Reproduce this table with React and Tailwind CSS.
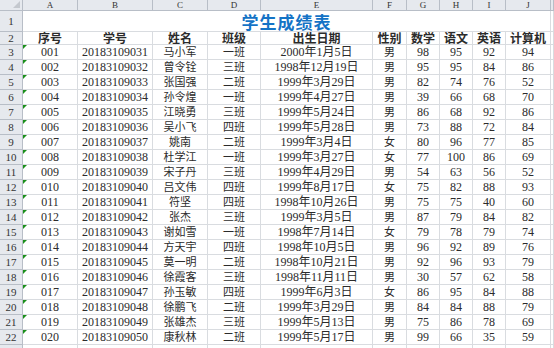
import React from "react";

const cols = ["A", "B", "C", "D", "E", "F", "G", "H", "I", "J", ""];
const headers = ["序号", "学号", "姓名", "班级", "出生日期", "性别", "数学", "语文", "英语", "计算机"];
const data = [
  ["001", "20183109031", "马小军", "一班", "2000年1月5日", "男", 98, 95, 92, 94],
  ["002", "20183109032", "曾令铨", "三班", "1998年12月19日", "男", 95, 95, 84, 86],
  ["003", "20183109033", "张国强", "二班", "1999年3月29日", "男", 82, 74, 76, 52],
  ["004", "20183109034", "孙令煌", "一班", "1999年4月27日", "男", 39, 66, 68, 70],
  ["005", "20183109035", "江晓勇", "三班", "1999年5月24日", "男", 86, 68, 92, 86],
  ["006", "20183109036", "吴小飞", "四班", "1999年5月28日", "男", 73, 88, 72, 84],
  ["007", "20183109037", "姚南", "二班", "1999年3月4日", "女", 80, 96, 77, 85],
  ["008", "20183109038", "杜学江", "一班", "1999年3月27日", "女", 77, 100, 86, 69],
  ["009", "20183109039", "宋子丹", "三班", "1999年4月29日", "男", 54, 63, 56, 52],
  ["010", "20183109040", "吕文伟", "四班", "1999年8月17日", "女", 75, 82, 88, 93],
  ["011", "20183109041", "符坚", "四班", "1998年10月26日", "男", 75, 75, 40, 60],
  ["012", "20183109042", "张杰", "三班", "1999年3月5日", "男", 87, 79, 84, 82],
  ["013", "20183109043", "谢如雪", "一班", "1998年7月14日", "女", 79, 78, 79, 74],
  ["014", "20183109044", "方天宇", "四班", "1998年10月5日", "男", 96, 92, 89, 76],
  ["015", "20183109045", "莫一明", "二班", "1998年10月21日", "男", 92, 96, 93, 79],
  ["016", "20183109046", "徐霞客", "三班", "1998年11月11日", "男", 30, 57, 62, 58],
  ["017", "20183109047", "孙玉敏", "四班", "1999年6月3日", "女", 86, 95, 84, 88],
  ["018", "20183109048", "徐鹏飞", "二班", "1999年3月29日", "男", 84, 84, 88, 79],
  ["019", "20183109049", "张雄杰", "三班", "1999年5月13日", "男", 75, 86, 78, 69],
  ["020", "20183109050", "康秋林", "二班", "1999年5月17日", "男", 99, 66, 35, 59],
];

const font = { fontFamily: '"Liberation Serif", "Noto Sans CJK SC", serif' };

function RowHead({ n }) {
  return (
    <div className="flex items-center justify-center bg-[#e6e9ee] border-r border-b border-[#b8bec7] text-[11px] leading-none text-[#333]">
      {n}
    </div>
  );
}

function Cell({ children, className = "", tri = false }) {
  return (
    <div className={`relative flex items-center justify-center border-r border-b border-[#d9dce0] text-[12px] leading-none text-[#2b2b2b] whitespace-nowrap ${className}`}>
      {tri && (
        <span className="absolute left-0 top-0 w-0 h-0 border-t-[4px] border-r-[4px] border-t-[#1a8f1a] border-r-transparent" />
      )}
      {children}
    </div>
  );
}

export default function App() {
  return (
    <div className="w-[554px] h-[348px] overflow-hidden bg-white" style={font}>
      <div className="grid grid-cols-[23px_55px_75px_55px_53px_112px_34px_33px_33px_33px_45px_1fr] grid-rows-[11px_21px_13px_repeat(21,15px)]">
        {/* corner */}
        <div className="relative bg-[#e6e9ee] border-r border-b border-[#b8bec7]">
          <span className="absolute right-[2px] bottom-[2px] w-0 h-0 border-b-[7px] border-l-[7px] border-b-[#c4c8ce] border-l-transparent" />
        </div>
        {cols.map((c, i) => (
          <div key={i} className="flex items-center justify-center bg-[#e6e9ee] border-r border-b border-[#b8bec7] text-[9px] leading-none text-[#333]">
            {c}
          </div>
        ))}
        {/* row 1 */}
        <RowHead n={1} />
        <div className="col-span-10 flex items-center justify-center border-r border-b border-[#d9dce0] text-[17px] leading-none font-bold text-[#1473c6] tracking-[1px]" style={{ fontFamily: '"Noto Sans CJK SC", sans-serif' }}>
          <span>学生成绩表</span>
        </div>
        <Cell />
        {/* row 2 */}
        <RowHead n={2} />
        {headers.map((h, i) => (
          <Cell key={i} className="font-bold">
            <span style={{ fontFamily: '"Noto Sans CJK SC", sans-serif' }} className="leading-none">{h}</span>
          </Cell>
        ))}
        <Cell />
        {data.map((r, ri) => (
          <React.Fragment key={ri}>
            <RowHead n={ri + 3} />
            {r.map((v, ci) => (
              <Cell key={ci} tri={ci === 0} className={ci === 2 || ci === 3 || ci === 5 ? "!text-[11px]" : ""}>
                {v}
              </Cell>
            ))}
            <Cell />
          </React.Fragment>
        ))}
        <RowHead n="" />
        {cols.map((c, i) => (
          <Cell key={"e" + i} />
        ))}
      </div>
    </div>
  );
}
